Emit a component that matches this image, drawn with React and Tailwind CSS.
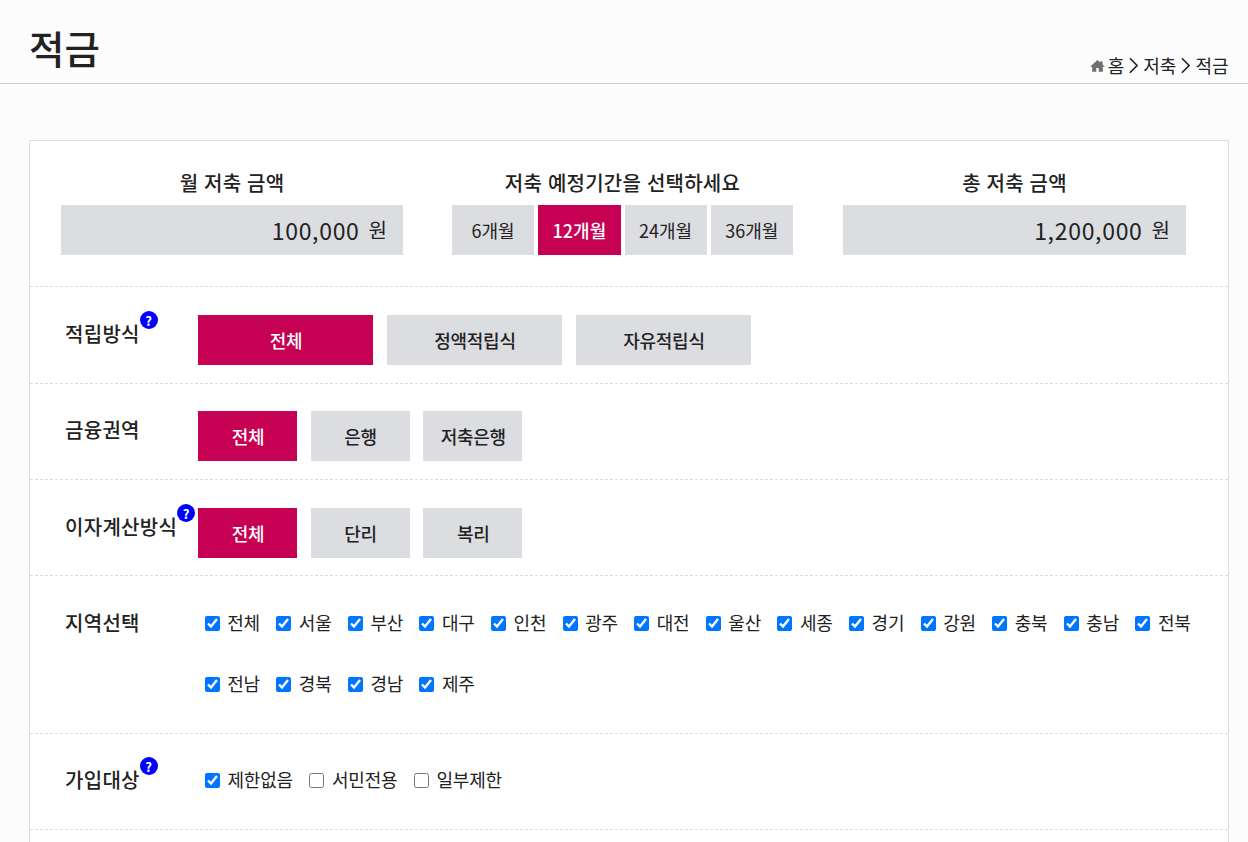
const REGIONS = ['전체', '서울', '부산', '대구', '인천', '광주', '대전', '울산', '세종', '경기', '강원', '충북', '충남', '전북', '전남', '경북', '경남', '제주'];

const HelpBadge = () => (
  <span className="absolute right-[-18px] top-[-9px] flex h-[18px] w-[18px] items-center justify-center rounded-full bg-[#0000ff] text-[13px] font-bold leading-none text-white">?</span>
);

const OptionButton = ({ label, active, width }) => (
  <button className={`h-[50px] ${width} pl-[1px] text-[18px] font-medium tracking-[-0.3px] ${active ? 'bg-[#c60052] text-white' : 'bg-[#dcdde1] text-[#222]'}`}>
    {label}
  </button>
);

const Row = ({ label, help, className, children }) => (
  <div className={`flex items-start border-b border-dashed border-[#dddddd] pl-[35px] ${className}`}>
    <div className="w-[133px] shrink-0">
      <span className="relative inline-block text-[20px] font-medium leading-[28px] tracking-[0.3px] text-[#222]">
        {label}
        {help && <HelpBadge />}
      </span>
    </div>
    {children}
  </div>
);

const Check = ({ label, checked, className }) => (
  <label className={`flex h-[28px] items-center gap-[7.5px] text-[18px] tracking-[-0.2px] text-[#222] ${className || ''}`}>
    <input type="checkbox" defaultChecked={checked} className="h-[15px] w-[15px]" />
    <span className="pb-[2px] leading-[26px]">{label}</span>
  </label>
);

const Heading = ({ children }) => (
  <h3 className="mb-[8px] text-center text-[20px] font-medium leading-[28px] tracking-[0.25px] text-[#222] [word-spacing:1px]">{children}</h3>
);

const AmountBox = ({ title, value, className }) => (
  <div className={className}>
    <Heading>{title}</Heading>
    <div className="flex h-[50px] items-center justify-end gap-[9px] bg-[#dcdde1] pr-[16px] text-[#222]">
      <span className="text-[23px] tracking-[0.7px]">{value}</span>
      <span className="text-[20px]">원</span>
    </div>
  </div>
);

const Chevron = () => (
  <svg viewBox="0 0 10 18" className="mx-[5px] h-[17px] w-[9px] fill-none stroke-[#222] stroke-[1.8]"><path d="M1 1l8 8-8 8" /></svg>
);

export default function App() {
  return (
    <div className="h-[842px] overflow-hidden bg-[#fcfcfc] font-['Noto_Sans_CJK_KR','Liberation_Sans',sans-serif]">
      <header className="flex h-[84px] items-end justify-between border-b border-[#cccccc] pl-[29px] pr-[19.5px]">
        <h1 className="mb-[8px] text-[38.5px] font-medium leading-[56px] text-[#222]">적금</h1>
        <nav className="mb-[4px] flex items-center text-[18px] leading-[28px] text-[#222]">
          <svg viewBox="0 0 24 24" className="mr-[3px] h-[15px] w-[15px] fill-[#6f6f6f]">
            <path d="M12 3 0 14h3.500v8H10v-6h4v6h6.500v-8H24l-4-3.700V5h-3.500v2.200z" />
          </svg>
          <span>홈</span>
          <Chevron />
          <span>저축</span>
          <Chevron />
          <span>적금</span>
        </nav>
      </header>

      <main className="ml-[29px] mt-[56px] w-[1200px] border border-[#dddddd] bg-white">
        <section className="flex h-[146px] border-b border-dashed border-[#dddddd] pl-[31px] pr-[42px] pt-[28px]">
          <AmountBox title="월 저축 금액" value="100,000" className="mr-[49px] w-[342px]" />
          <div className="w-[341px]">
            <Heading>저축 예정기간을 선택하세요</Heading>
            <div className="flex gap-[4px]">
              {['6개월', '12개월', '24개월', '36개월'].map((m) => (
                <button key={m} className={`h-[50px] flex-1 text-[18px] ${m === '12개월' ? 'bg-[#c60052] font-medium text-white' : 'bg-[#dcdde1] text-[#222]'}`}>{m}</button>
              ))}
            </div>
          </div>
          <AmountBox title="총 저축 금액" value="1,200,000" className="ml-auto w-[343px]" />
        </section>

        <Row label="적립방식" help className="h-[97px] pt-[33px]">
          <div className="-mt-[5px] flex gap-[14px]">
            <OptionButton label="전체" active width="w-[175px]" />
            <OptionButton label="정액적립식" width="w-[175px]" />
            <OptionButton label="자유적립식" width="w-[175px]" />
          </div>
        </Row>

        <Row label="금융권역" className="h-[96px] pt-[32px]">
          <div className="-mt-[5px] flex gap-[13.6px]">
            <OptionButton label="전체" active width="w-[99px]" />
            <OptionButton label="은행" width="w-[99px]" />
            <OptionButton label="저축은행" width="w-[99px]" />
          </div>
        </Row>

        <Row label="이자계산방식" help className="h-[96px] pt-[33px]">
          <div className="-mt-[5px] flex gap-[13.6px]">
            <OptionButton label="전체" active width="w-[99px]" />
            <OptionButton label="단리" width="w-[99px]" />
            <OptionButton label="복리" width="w-[99px]" />
          </div>
        </Row>

        <Row label="지역선택" className="h-[158px] pt-[33px]">
          <div className="ml-[6.7px] flex flex-wrap content-start gap-y-[33px]">
            {REGIONS.map((r) => (
              <Check key={r} label={r} checked className="w-[71.6px]" />
            ))}
          </div>
        </Row>

        <Row label="가입대상" help className="h-[96px] pt-[32px]">
          <div className="ml-[7px] flex gap-[16.5px]">
            <Check label="제한없음" checked />
            <Check label="서민전용" />
            <Check label="일부제한" />
          </div>
        </Row>

        <div className="h-[96px]" />
      </main>
    </div>
  );
}
